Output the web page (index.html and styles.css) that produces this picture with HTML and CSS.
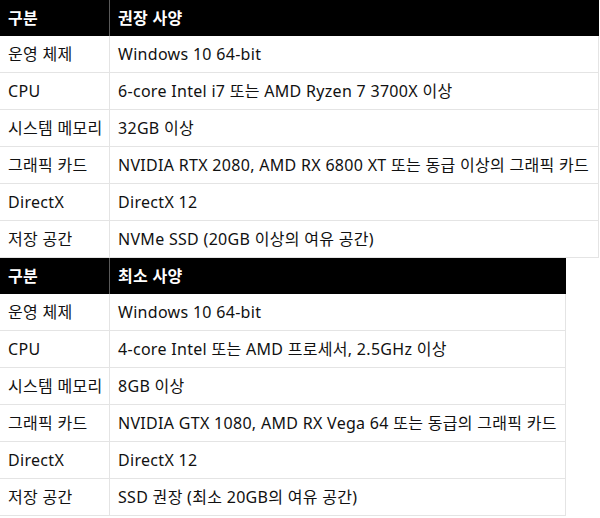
FILE: index.html
```html
<!DOCTYPE html>
<html lang="ko">
<head>
<meta charset="utf-8">
<link rel="stylesheet" href="styles.css">
</head>
<body>
<table class="spec spec-rec">
  <thead>
    <tr><th class="c1">구분</th><th class="c2">권장 사양</th></tr>
  </thead>
  <tbody>
    <tr><td class="c1">운영 체제</td><td class="c2">Windows 10 64-bit</td></tr>
    <tr><td class="c1">CPU</td><td class="c2">6-core Intel i7 또는 AMD Ryzen 7 3700X 이상</td></tr>
    <tr><td class="c1">시스템 메모리</td><td class="c2">32GB 이상</td></tr>
    <tr><td class="c1">그래픽 카드</td><td class="c2">NVIDIA RTX 2080, AMD RX 6800 XT 또는 동급 이상의 그래픽 카드</td></tr>
    <tr><td class="c1">DirectX</td><td class="c2">DirectX 12</td></tr>
    <tr><td class="c1">저장 공간</td><td class="c2">NVMe SSD (20GB 이상의 여유 공간)</td></tr>
  </tbody>
</table>
<table class="spec spec-min">
  <thead>
    <tr><th class="c1">구분</th><th class="c2">최소 사양</th></tr>
  </thead>
  <tbody>
    <tr><td class="c1">운영 체제</td><td class="c2">Windows 10 64-bit</td></tr>
    <tr><td class="c1">CPU</td><td class="c2">4-core Intel 또는 AMD 프로세서, 2.5GHz 이상</td></tr>
    <tr><td class="c1">시스템 메모리</td><td class="c2">8GB 이상</td></tr>
    <tr><td class="c1">그래픽 카드</td><td class="c2">NVIDIA GTX 1080, AMD RX Vega 64 또는 동급의 그래픽 카드</td></tr>
    <tr><td class="c1">DirectX</td><td class="c2">DirectX 12</td></tr>
    <tr><td class="c1">저장 공간</td><td class="c2">SSD 권장 (최소 20GB의 여유 공간)</td></tr>
  </tbody>
</table>
</body>
</html>
```
FILE: styles.css
```css
html, body {
  margin: 0;
  padding: 0;
  background: #ffffff;
}
body {
  font-family: "Noto Sans", "Noto Sans CJK KR", sans-serif;
  font-size: 16px;
  letter-spacing: 0.3px;
  color: #111111;
}
.spec {
  border-collapse: separate;
  border-spacing: 0;
  table-layout: fixed;
}
.spec-rec { width: 599px; }
.spec-min { width: 566px; }
.spec th,
.spec td {
  padding: 8px 8px;
  height: 20px;
  line-height: 20px;
  text-align: left;
  white-space: nowrap;
  overflow: hidden;
}
.spec th {
  background: #000000;
  color: #ffffff;
  font-weight: 700;
}
.spec th.c1 {
  border-right: 1px solid #5a5a5a;
}
.spec .c1 {
  width: 93px;
}
.spec td {
  border-bottom: 1px solid #e4e4e4;
}
.spec td.c1 {
  border-right: 1px solid #e4e4e4;
}
.spec td.c2 {
  border-right: 1px solid #e4e4e4;
}
.spec th.c2 {
  border-right: 1px solid #000000;
}
```
